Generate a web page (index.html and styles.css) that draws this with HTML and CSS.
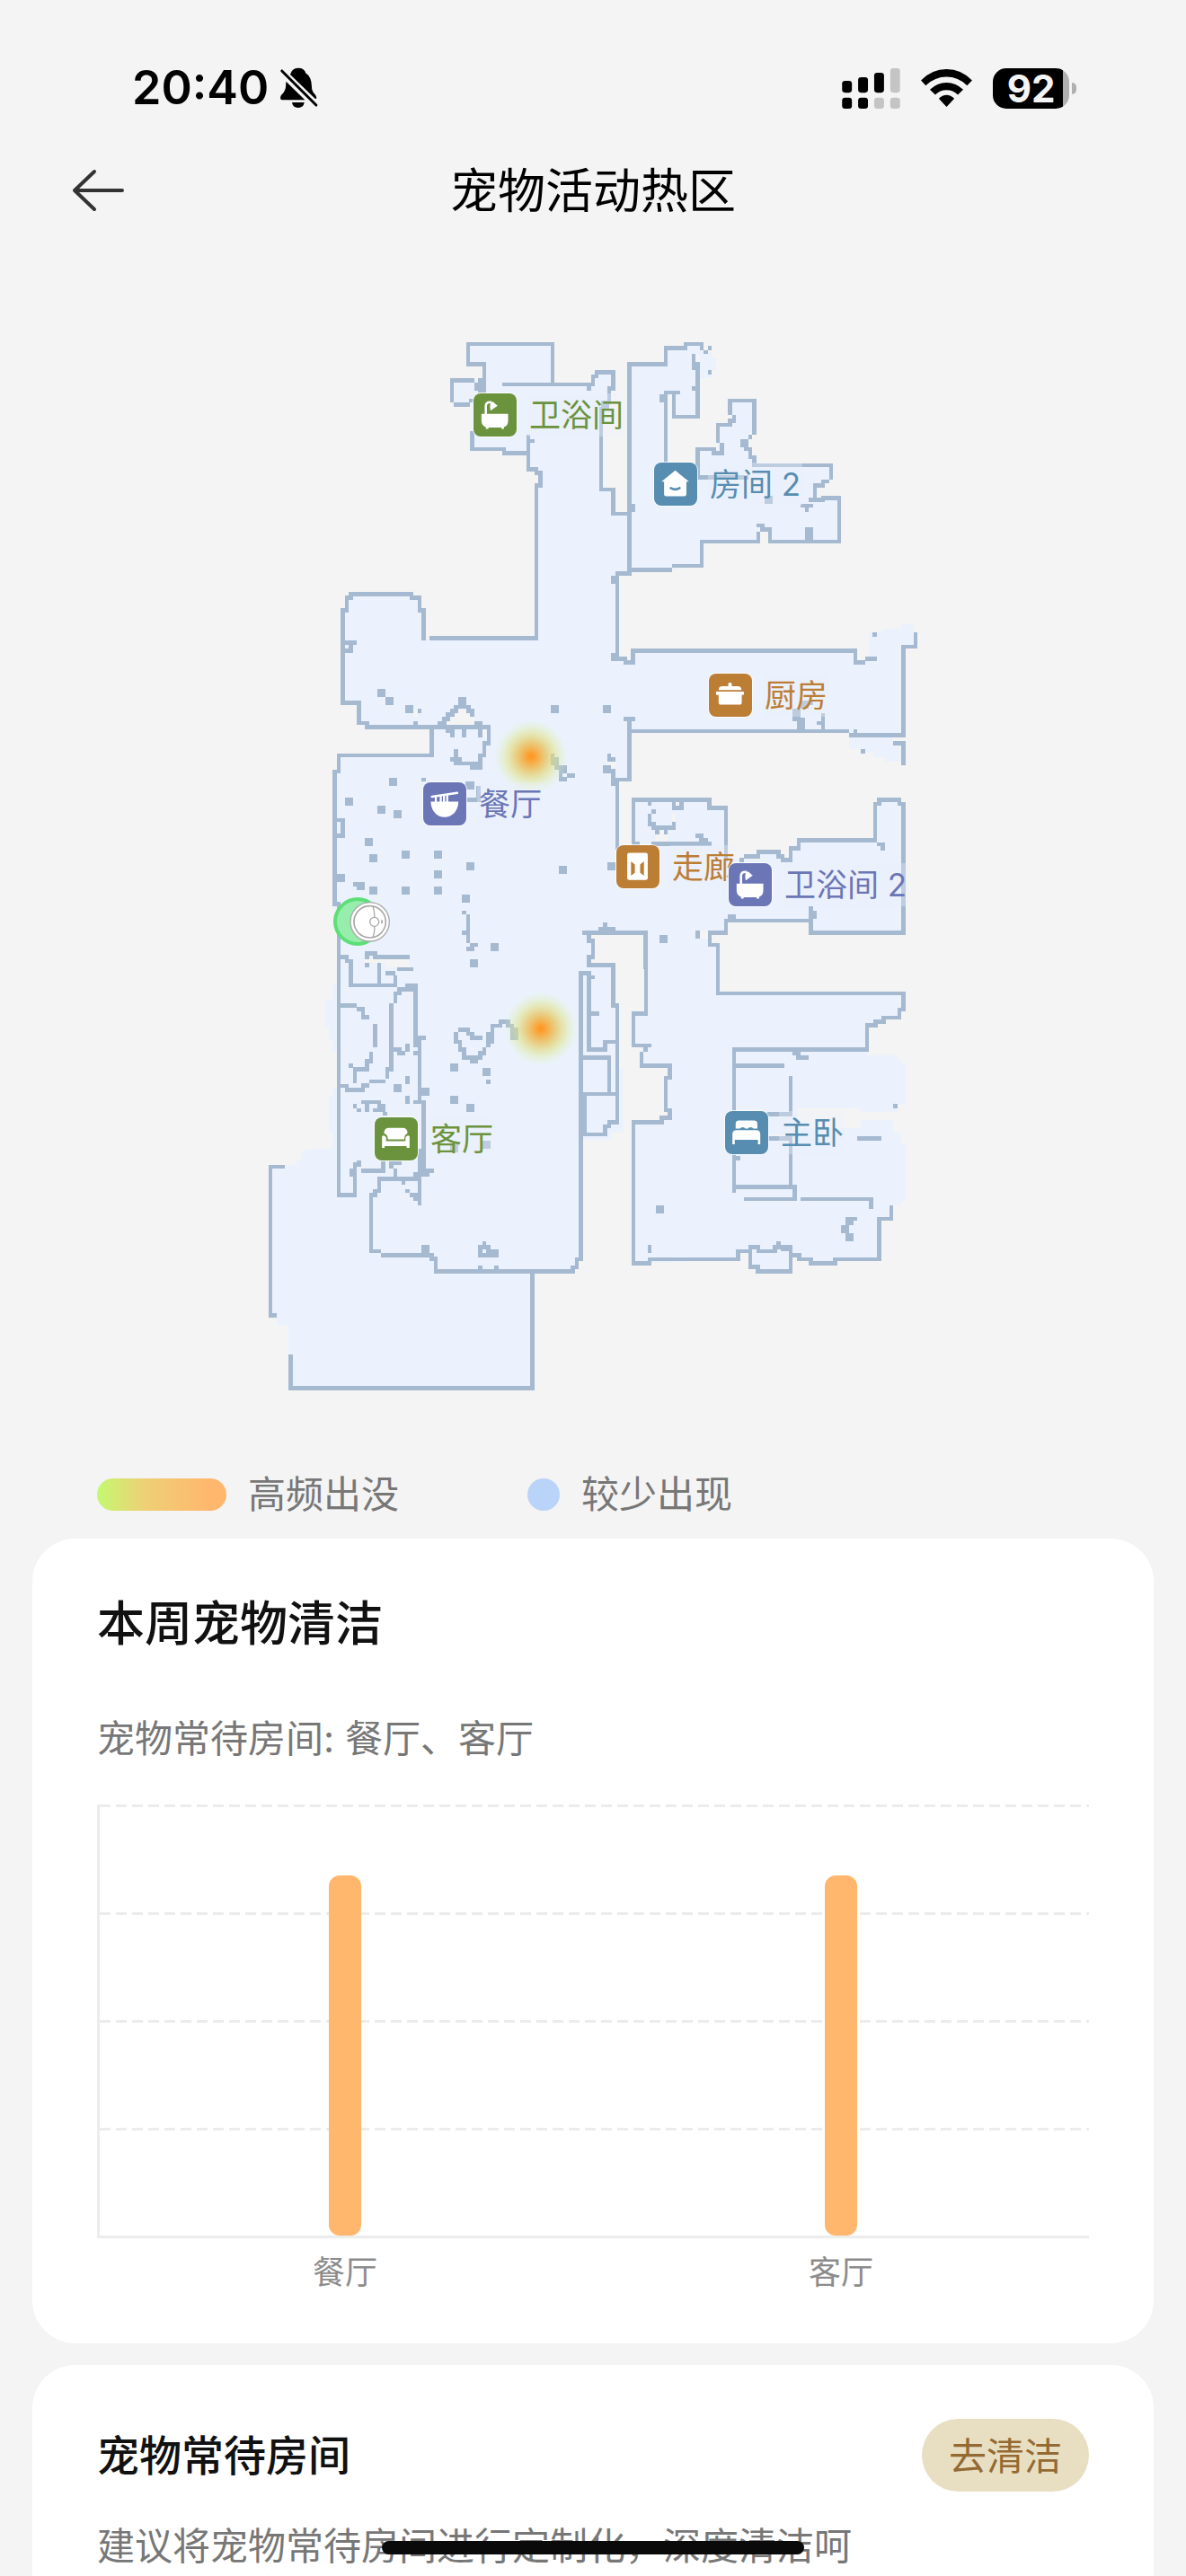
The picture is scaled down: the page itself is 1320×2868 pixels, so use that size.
FILE: index.html
```
<!doctype html>
<html lang="zh-CN">
<head>
<meta charset="utf-8">
<meta name="viewport" content="width=device-width, initial-scale=1">
<title>宠物活动热区</title>
<link rel="stylesheet" href="styles.css">
</head>
<body>

<!-- shared room icons -->
<svg class="sprite" aria-hidden="true">
  <symbol id="icon-bath" viewBox="0 0 147 147">
    <path d="M27 70h91v22q0 18-14 23v6h-9v-5H51v5h-9v-6q-15-5-15-23z" fill="#fff"/>
    <path d="M42 72V44q0-14 15-14h4" fill="none" stroke="#fff" stroke-width="8"/>
    <path d="M58 31l8-3 16 14-24 17q-3-14 0-28z" fill="#fff"/>
  </symbol>
  <symbol id="icon-house" viewBox="0 0 147 147">
    <path d="M72 27l47 38h-9v43q0 7-7 7H41q-7 0-7-7V65h-9z" fill="#fff"/>
    <path d="M57 87q15 9 30 0" fill="none" stroke="currentColor" stroke-width="8" stroke-linecap="round"/>
  </symbol>
  <symbol id="icon-pot" viewBox="0 0 147 147">
    <path d="M66 43V35q0-4 6-4t6 4v8h20q13 0 13 13H33q0-13 13-13zM27 61h90q3 0 3 5t-3 7h-5v25q0 8-8 8H41q-8 0-8-8V73h-6q-3 0-3-7t3-5z" fill="#fff"/>
  </symbol>
  <symbol id="icon-door" viewBox="0 0 147 147">
    <rect x="37" y="26" width="70" height="93" rx="7" fill="#fff"/>
    <path d="M50 55l13 11v28l-13 10zM94 55L81 66v28l13 10z" fill="currentColor"/>
  </symbol>
  <symbol id="icon-bowl" viewBox="0 0 147 147">
    <path d="M26 66h94c0 30-20 53-47 53S26 96 26 66z" fill="#fff"/>
    <path d="M30 49l86-13" stroke="#fff" stroke-width="8" stroke-linecap="round"/>
    <path d="M43 46v21M60 44v23M71 43v24M82 41v26" stroke="#fff" stroke-width="7"/>
  </symbol>
  <symbol id="icon-sofa" viewBox="0 0 147 147">
    <path d="M32 54q0-18 17-18h46q17 0 17 18-11 4-11 21H45q0-17-13-21z" fill="#fff"/>
    <path d="M25 64q7-5 14 4v13h66V68q7-9 14-4v40h-10v-6H34v6h-9z" fill="#fff"/>
  </symbol>
  <symbol id="icon-bed" viewBox="0 0 147 147">
    <path d="M36 60V43q0-11 11-11h52q11 0 11 11v17H96q-2-5-9-5t-9 5h-9q-2-5-9-5t-9 5z" fill="#fff"/>
    <path d="M25 113V79q0-14 14-14h67q14 0 14 14v34h-8V98H33v15z" fill="#fff"/>
  </symbol>
</svg>

<div class="screen">

  <div class="status">
    <div class="status-side">
      <span class="clock">20:40</span>
      <svg class="bell" viewBox="750 44 130 140" aria-hidden="true">
        <path d="M788 64q6-18 26-18t25 18q20 12 20 46c0 22 16 24 16 37q0 5-5 3L786 68zM772 92l64 62h-77q-7 0-6-8c1-12 15-14 18-36zM792 163h42q-3 18-21 18t-21-18z"/>
        <path d="M758 56l116 116" fill="none" stroke="#000" stroke-width="9" stroke-linecap="round"/>
      </svg>
    </div>
    <div class="status-side status-right">
      <svg class="signal" viewBox="51 42 195 136" aria-hidden="true">
        <rect x="51" y="84" width="33" height="40" rx="10"/>
        <rect x="105" y="72" width="33" height="52" rx="10"/>
        <rect x="159" y="57" width="33" height="67" rx="10"/>
        <rect class="off" x="213" y="42" width="33" height="82" rx="10"/>
        <rect x="51" y="141" width="33" height="37" rx="10"/>
        <rect x="105" y="141" width="33" height="37" rx="10"/>
        <rect class="off" x="159" y="141" width="33" height="37" rx="10"/>
        <rect class="off" x="213" y="141" width="33" height="37" rx="10"/>
      </svg>
      <svg class="wifi" viewBox="315 42 172 136" aria-hidden="true">
        <path d="M315 83q36-38 86-38t86 38l-17 17q-30-29-69-29t-70 29zM345 114q24-24 56-24t56 24l-18 17q-16-16-38-16t-38 16zM375 144q12-12 26-12t26 12l-26 28z"/>
      </svg>
      <div class="battery"><span class="battery-level">92</span></div>
    </div>
  </div>

  <header class="nav">
    <button class="back" type="button" aria-label="返回">
      <svg viewBox="0 0 60 50" aria-hidden="true"><path d="M25 4L3 25l22 21M3 25h53"/></svg>
    </button>
    <h1>宠物活动热区</h1>
  </header>

  <div class="map">
    <svg class="plan" viewBox="840 1080 2280 3600" aria-hidden="true">
      <defs>
        <radialGradient id="heat">
          <stop offset="0" stop-color="#ff9420"/>
          <stop offset=".12" stop-color="#fba233" stop-opacity=".97"/>
          <stop offset=".4" stop-color="#e8c565" stop-opacity=".8"/>
          <stop offset=".65" stop-color="#dfe48a" stop-opacity=".55"/>
          <stop offset="1" stop-color="#dcf5c4" stop-opacity="0"/>
        </radialGradient>
      </defs>

      <!-- floor -->
      <g class="floor">
        <path transform="translate(1440 1080)" d="M123 69H405V204H540V163H608V217H594V270H567V555H608V636H662V836H621V1140H351V541H364V494H324V433H243V420H136V271H69V190H177V136H123zM662 136H783V83H849V69H903V96H936V117H951V155H936V182H889V312H810V231H783V515H889V420H957V339H1005V258H1079V366H1058V420L1079 474H1335V522L1281 541V583H1362V729H1131V688H1092V729H903V810L797 823H662z"/>
        <path transform="translate(1080 1920)" d="M711 0H980V280H1008V293H1080V522H1021V684H981V1140H37V657H51V603H361V508H145L118 495V427H64V118L91 64H294L334 118V213H711z"/>
        <path transform="translate(2040 2040)" d="M-10 160L75 173V133H816V173L862 160V72H902V60H969V45H1011V120H977V415H802L789 402H62V563H-10zM795 421H941V435H969V503H915V488H875V475H848V461H795zM75 631H329V658H384V830H437L450 820 492 806H560L573 833H600V793L627 766H882V645L895 631H963L977 645V1075H667V1035H384V1075H330V1116H357V1140H116V1075H-20V600H20V779H75z"/>
        <path transform="translate(1050 2940)" d="M67 0H1200V175H997L970 162 956 175H916V202H930V250H916V283H997V418H1011V630H1032V842H990V868H897L889 1260H0V897H61V840H48V720H61V693H75V572H61V532H48V490H37V400H61V345H81V80H67z"/>
        <path transform="translate(1920 3060)" d="M237 0H505V55H450V96H477V258H1097V312L1083 339H1030L975 365V465H1077V480H1090V492H1103V627H1077V653H954V641H740V708H954V681H1062V722H1090V762H1103V950H1090V965H1056V1011H1016V1146H869V1160H788V1146H748L734 1132H720V1186H612L585 1172V1119H545V1146L249 1160H195V688H290L317 674V648H303V540H317V499H222V432H195V325H237z"/>
        <path transform="translate(840 3840)" d="M177 0V8H165V35H150V50H63V560H84V587H123V797H937V406H1073L1100 366V0z"/>
      </g>

      <!-- unscanned gaps -->
      <g class="gap">
        <path transform="translate(1440 1080)" d="M882 102h15v27h-15z"/>
        <path transform="translate(1080 1920)" d="M463 441L503 472V501H408zM531 515h12v28h-12zM300 447h15v27h-15zM948 623h27v27h-27z"/>
        <path transform="translate(2040 2040)" d="M150 732h39v40h-39zM204 678h12v27h-12zM216 638h13v12h-13zM297 1068h27v27h-27z"/>
        <path transform="translate(1050 2940)" d="M169 262H318V290H237V277H169z"/>
        <path transform="translate(1920 3060)" d="M417 48h27v27h-27zM650 730h70v8h-70z"/>
      </g>

      <!-- walls -->
      <g class="wall">
        <path transform="translate(1440 1080)" d="M177 222V136H123V69H405V204M243 204H526V218M540 204V177H552V163H608V217H594V264M567 285V555H608V636H655M69 190H138M69 190V258M81 271H123M133 258V258.1M150 204V218M136 366V420H243V433H324V379M338 393H338.1M324 433V488H351V500H364V541H351V1052H0M662 136V836M662 136H783V83H849V69H903V83M917 96H917.1M930 83H930.1M930 163H930.1M876 108V150M889 136V312H810V231H783V460M824 231H824.1M770 244V258M876 217H876.1M675 609V623M998 270V300M998 258H1079V366M1011 312V326H998V339H957V393M970 406V433H943V420H889V515H1052M1065 379V379.1M1052 420H1065V447H1079V474H1335V515M1322 528H1308V541H1281V583M1268 590H1308V583H1362V729H1131V688H1106V675H1092M1240 609H1268M1254 622V622.1M1092 702V729H903V810H810M797 823H662M662 836H621V1106M627 1120H648V1134"/>
        <path transform="translate(1080 1920)" d="M334 213V118H321V77H294V64H91V77H78V118H64V427H118V495H145V508H552V563H537V603H524V643H496M78 226H105M91 240V253H78M361 508V603H51V657H37V1101M416 522H430V535M469 515V535M524 522V535M511 495H524M442 590V616H430M442 616H455M442 630H524M442 441H484V454H497V467M430 454V467H416V481H403V495H388M442 441V454H430M308 495H308.1M321 454H321.1M334 684H334.1M105 1033H105.1M51 819H64V872H51M480 697H497M485 709H497M517 712V751H485M765 603V630M778 616V643H806V656H792V683H806M820 670H834M987 280H1008V293H1034V253M1008 481H1034M1021 481V684H968M954 603V616H968M967 656V697M981 690V910"/>
        <path transform="translate(2040 2040)" d="M75 133V173H48V160H7M75 133H816V173H843M856 160H881M881 79H881.1M1017 79V120H977V415H802M816 402V402.1M789 402H62M667 307H667.1M708 348V390M694 375H694.1M841 469H841.1M948 442H977V510M75 779V631H329V658H384V830M75 779H90M142 779H330M129 631V644M210 631V658H236V644M142 671H142.1M129 684V712H142V725H210V712M155 725V740M183 725V740M289 752H302V765H317M437 833H437.1M450 820H492V806H560V820H573V833H600V793H627V766H882V645H895V631H963V645H977V1075H667V994M680 1008V1022M667 1035H384V1075H330V1116H357V1140M397 1022H410M895 780H908V795M-90 1075H116V1190M289 1075V1088"/>
        <path transform="translate(1050 2940)" d="M81 80V1052H135V965M123 970V984M148 943V950H135M162 970H230V945M88 256H108V270H121V351H270V325M243 310H264M176 283H176.1M176 256V244H203V256H311M283 297H323M216 283V351M270 404V378H283V364H338M310 351H338V550M257 418V632H243V657M230 672H190M176 686H162V700H108V687H88M351 526H365M351 540V735M338 578H338.1M338 741H365V970H392M337 983H378M351 905V1079M88 418H135M148 431H162V458H176M202 487V550M189 580V605H176V632H135V672M121 619H121.1M264 565H283V578H296M310 553V565M310 660V674M310 727V740M162 741H216V755M135 755H135.1M148 768H148.1M176 755V767M202 768H202.1M236 780H236.1M257 956V945H284M270 970V990M345 997H216V1038H203V1052H189V1239H216M229 1252H392M297 1010H297.1M310 1038H310.1M324 1052H338V1065H345M499 108H499.1M513 120V203M499 175H499.1M513 229H526V216H540M486 499H513V513H526V526H553M473 513V540H486V565H499V592H526V605H540V592H553V578H567V565M580 550V526M594 513V486H621V472H647V486H660V500M580 673H580.1M916 175H956V162H997V175H1080M970 148H970.1M916 175V202H930V257H916V283H997V418H1011V808H984V822H970V849H903V714M889 310V1260M889 310H916V565H970V540H1005M930 324H930.1M930 445H944M889 592H984V714M889 714H1005"/>
        <path transform="translate(1920 3060)" d="M237 55V325H195V432H249M236 445H236.1M222 460V499H317V540H303V648H317V674H290V688H195V1160H249V1146H545V1119H585V1172H610V1186H720V1105H667V1119H612V1105H585V1119M249 1105V1119M680 1092H680.1M693 1112H712M734 1132H748V1146H788V1160H869V1146H1016V1011H1056V972M409 55V68M477 96V258H1097V312H1083V339H1030V352H1003V365H975V445H531V648M733 458H746V472H773M543 499H692M720 540V661H650M650 742H720V904M531 800V917M545 809H545.1M537 904H734V945H570M760 945H989V971M948 742H1016M1069 634H1069.1M909 1011H935"/>
        <path transform="translate(840 3840)" d="M104 57H63V554H77M130 690V797H937V406M594 352H600V365H615V406H1073V393H1086V366H1100V0M763 352V325H791V340H818V352H763M777 312H777.1M763 393H763.1M817 393H817.1"/>
      </g>

      <!-- obstacles -->
      <g class="block">
        <path transform="translate(1440 1080)" d="M168 197V216M580 272H580.1M1045 400H1045.1M1262 695V716M1126 590H1126.1M613 856H613.1M613 1114H613.1"/>
        <path transform="translate(1080 1920)" d="M463 420h.1M193 394h.1M220 421h.1M286 448h.1M772 448h.1M946 448h.1M232 691h.1M85 757h.1M193 784h.1M247 799h.1M151 892h.1M166 946h.1M274 934h.1M382 934h.1M382 1000h.1M490 973h.1M799 985h.1M961 973h.1M166 1054h.1M274 1054h.1M382 1054h.1M475 1081h.1M58 1012h.1M124 1039h.1M946 650h.1"/>
        <path transform="translate(2040 2040)" d="M620 340V355M634 370V384M647 314h.1M175 1096h.1"/>
        <path transform="translate(1050 2940)" d="M277 694h.1M371 706h.1M223 760h.1M358 911V976M370 1231h.1M601 223h.1M532 277h.1M587 520V532M667 505V520M466 625h.1M574 640h.1M466 733h.1M520 760h.1M466 895h.1M574 883h.1"/>
        <path transform="translate(1920 3060)" d="M283 979h.1M917 1018h.1M902 1045h.1M917 1072h.1"/>
      </g>

      <!-- hot spots -->
      <circle cx="1773" cy="2527" r="126" fill="url(#heat)"/>
      <circle cx="1806" cy="3436" r="126" fill="url(#heat)"/>

      <!-- dock and robot -->
      <circle cx="1194" cy="3078" r="75" fill="#97edac" stroke="#5ddf78" stroke-width="12"/>
      <g class="robot" fill="none" stroke="#aaa" stroke-width="4">
        <circle cx="1235" cy="3079" r="65" fill="#fff"/>
        <circle cx="1235" cy="3079" r="53" stroke-width="5"/>
        <path d="M1245 3028q6 16 5 36M1250 3094q2 20-5 36"/>
        <circle cx="1250" cy="3079" r="15" fill="#fff"/>
        <path d="M1275 3073v12" stroke-width="5"/>
      </g>
    </svg>

    <div class="room bath green"><svg><use href="#icon-bath"/></svg><span>卫浴间</span></div>
    <div class="room room2 blue"><svg><use href="#icon-house"/></svg><span>房间 2</span></div>
    <div class="room kitchen brown"><svg><use href="#icon-pot"/></svg><span>厨房</span></div>
    <div class="room hall brown"><svg><use href="#icon-door"/></svg><span>走廊</span></div>
    <div class="room dining purple"><svg><use href="#icon-bowl"/></svg><span>餐厅</span></div>
    <div class="room bath2 purple"><svg><use href="#icon-bath"/></svg><span>卫浴间 2</span></div>
    <div class="room living green"><svg><use href="#icon-sofa"/></svg><span>客厅</span></div>
    <div class="room bedroom blue"><svg><use href="#icon-bed"/></svg><span>主卧</span></div>
  </div>

  <div class="legend">
    <div class="legend-item"><i class="swatch often"></i>高频出没</div>
    <div class="legend-item"><i class="swatch rare"></i>较少出现</div>
  </div>

  <section class="card">
    <h2>本周宠物清洁</h2>
    <p class="sub">宠物常待房间: 餐厅、客厅</p>
    <div class="chart">
      <div class="grid-lines"><i></i><i></i><i></i><i></i></div>
      <div class="bars">
        <div class="bar"></div>
        <div class="bar"></div>
      </div>
    </div>
    <div class="labels"><span>餐厅</span><span>客厅</span></div>
  </section>

  <section class="card suggest">
    <div class="suggest-head">
      <h3>宠物常待房间</h3>
      <button class="go" type="button">去清洁</button>
    </div>
    <p class="desc">建议将宠物常待房间进行定制化，深度清洁呵<br>护宠物健康。</p>
  </section>

  <div class="home-bar"></div>
</div>

</body>
</html>
```
FILE: styles.css
```
* {
  box-sizing: border-box;
}

body {
  margin: 0;
  background: #f4f4f4;
  color: #111;
  font-family: Inter, "Noto Sans CJK SC", sans-serif;
}

h1, h2, h3, p {
  margin: 0;
  font-weight: 500;
}

button {
  border: 0;
  font-family: inherit;
}

.sprite {
  position: absolute;
  width: 0;
  height: 0;
}

.screen {
  position: relative;
  height: 100vh;
  overflow: hidden;
}

/* status bar */

.status {
  display: flex;
  justify-content: space-between;
  align-items: center;
  height: 146px;
  padding: 50px 122px 0 147px;
}

.status-side {
  display: flex;
  align-items: center;
  gap: 12px;
}

.status-right {
  gap: 23px;
}

.clock {
  font-size: 52px;
  line-height: 60px;
  font-weight: 600;
  color: #000;
}

.bell {
  width: 43px;
  height: 46px;
}

.signal {
  width: 65px;
  height: 45px;
}

.off {
  fill: #c4c4c4;
}

.wifi {
  width: 57px;
  height: 45px;
}

.battery {
  position: relative;
  width: 85px;
  height: 45px;
  margin-right: 8px;
  border-radius: 15px;
  background: linear-gradient(to right, #000 78px, #b0b0b0 78px);
  color: #f4f4f4;
  text-align: center;
}

.battery::after {
  content: "";
  position: absolute;
  top: 16px;
  right: -8px;
  width: 5px;
  height: 13px;
  border-radius: 0 5px 5px 0;
  background: #b0b0b0;
}

.battery-level {
  font-size: 42px;
  line-height: 45px;
  font-weight: 700;
}

/* title row */

.nav {
  display: grid;
  grid-template-columns: 140px 1fr 140px;
  align-items: center;
  height: 132px;
}

.back {
  justify-self: end;
  width: 60px;
  height: 50px;
  padding: 0;
  background: none;
}

.back svg {
  display: block;
  fill: none;
  stroke: #333;
  stroke-width: 4;
  stroke-linecap: round;
  stroke-linejoin: round;
}

.nav h1 {
  padding-top: 2px;
  font-size: 53px;
  line-height: 66px;
  font-weight: 400;
  color: #000;
  text-align: center;
}

/* floor plan */

.map {
  position: relative;
  width: 760px;
  margin: 82px auto 0;
}

.plan {
  display: block;
  width: 100%;
  shape-rendering: crispEdges;
}

.plan circle,
.robot path {
  shape-rendering: auto;
}

.floor {
  fill: #ebf2fe;
}

.gap {
  fill: #f4f4f4;
}

.wall,
.block {
  fill: none;
  stroke: #a5b9d0;
  stroke-width: 14;
  stroke-linecap: square;
}

.block path {
  stroke-width: 27;
}

.room {
  position: absolute;
  display: flex;
  align-items: center;
  gap: 12px;
  font-size: 35px;
  line-height: 48px;
  white-space: nowrap;
}

.room svg {
  width: 48px;
  height: 48px;
  border-radius: 8px;
  background: currentColor;
  box-shadow: 0 0 0 1px rgba(255, 255, 255, .8);
}

.room span {
  padding: 0 2px;
  background: rgba(236, 240, 250, .35);
}

.green { color: #6b933d; }
.blue { color: #578db0; }
.brown { color: #bc7d35; }
.purple { color: #6b76b6; }

.bath { left: 247px; top: 78px; }
.room2 { left: 448px; top: 155px; }
.kitchen { left: 509px; top: 390px; }
.hall { left: 406px; top: 581px; }
.dining { left: 191px; top: 511px; }
.bath2 { left: 531px; top: 601px; }
.living { left: 137px; top: 884px; }
.bedroom { left: 527px; top: 877px; }

.legend {
  display: flex;
  gap: 143px;
  margin: 76px 108px 21px;
}

.legend-item {
  display: flex;
  align-items: center;
  gap: 24px;
  font-size: 42px;
  line-height: 56px;
  color: #777;
}

.swatch {
  width: 36px;
  height: 36px;
  border-radius: 18px;
}

.often {
  width: 144px;
  background: linear-gradient(to right, #c4f970, #efcf76 38%, #ffb76d 88%);
}

.rare {
  background: #bad3f9;
}

/* cards */

.card {
  margin: 0 36px 24px;
  padding: 60px 72px 55px;
  border-radius: 48px;
  background: #fff;
}

.card h2 {
  padding-top: 2px;
  font-size: 53px;
  line-height: 66px;
}

.sub {
  margin-top: 65px;
  font-size: 42px;
  line-height: 60px;
  font-weight: 400;
  color: #777;
}

.chart {
  display: grid;
  height: 483px;
  margin-top: 43px;
  border-left: 3px solid #ececec;
  border-bottom: 3px solid #ececec;
}

.grid-lines,
.bars {
  grid-area: 1 / 1;
}

.grid-lines {
  display: grid;
  grid-template-rows: repeat(4, 1fr);
}

.grid-lines i {
  height: 3px;
  background: repeating-linear-gradient(to right, #ececec 0 12px, transparent 12px 18px);
}

.bars,
.labels {
  display: flex;
  justify-content: space-around;
}

.bars {
  align-items: flex-end;
  margin-left: -3px;
}

.bar {
  width: 36px;
  height: 401px;
  border-radius: 12px;
  background: #ffb76d;
}

.labels {
  margin-top: 14px;
  font-size: 36px;
  line-height: 48px;
  color: #8c8c8c;
}

.suggest-head {
  display: flex;
  justify-content: space-between;
  align-items: center;
}

.suggest-head h3 {
  font-size: 47px;
  line-height: 60px;
}

.go {
  width: 186px;
  height: 81px;
  padding: 0 0 4px;
  border-radius: 41px;
  background: #e8dfc3;
  color: #946a32;
  font-size: 42px;
}

.desc {
  margin-top: 34px;
  font-size: 42px;
  line-height: 54px;
  font-weight: 400;
  color: #777;
}

.home-bar {
  position: absolute;
  left: 50%;
  bottom: 24px;
  width: 470px;
  height: 15px;
  margin-left: -235px;
  border-radius: 8px;
  background: #0a0a0a;
}
```
